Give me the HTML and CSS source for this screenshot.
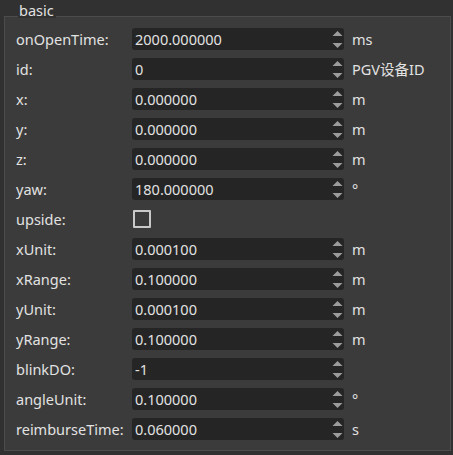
FILE: index.html
```html
<!DOCTYPE html>
<html>
<head>
<meta charset="utf-8">
<link rel="stylesheet" href="styles.css">
</head>
<body>
<div class="group">
  <div class="legend">basic</div>
  <div class="rows">
    <div class="label">onOpenTime:</div>
    <div class="spin"><span class="val">2000.000000</span><span class="arrows"><svg width="11" height="18" viewBox="0 0 11 18"><path d="M5.5 1 L10.5 6 L0.5 6 Z"/><path d="M0.5 13 L10.5 13 L5.5 18 Z"/></svg></span></div>
    <div class="unit">ms</div>

    <div class="label">id:</div>
    <div class="spin"><span class="val">0</span><span class="arrows"><svg width="11" height="18" viewBox="0 0 11 18"><path d="M5.5 1 L10.5 6 L0.5 6 Z"/><path d="M0.5 13 L10.5 13 L5.5 18 Z"/></svg></span></div>
    <div class="unit">PGV设备ID</div>

    <div class="label">x:</div>
    <div class="spin"><span class="val">0.000000</span><span class="arrows"><svg width="11" height="18" viewBox="0 0 11 18"><path d="M5.5 1 L10.5 6 L0.5 6 Z"/><path d="M0.5 13 L10.5 13 L5.5 18 Z"/></svg></span></div>
    <div class="unit">m</div>

    <div class="label">y:</div>
    <div class="spin"><span class="val">0.000000</span><span class="arrows"><svg width="11" height="18" viewBox="0 0 11 18"><path d="M5.5 1 L10.5 6 L0.5 6 Z"/><path d="M0.5 13 L10.5 13 L5.5 18 Z"/></svg></span></div>
    <div class="unit">m</div>

    <div class="label">z:</div>
    <div class="spin"><span class="val">0.000000</span><span class="arrows"><svg width="11" height="18" viewBox="0 0 11 18"><path d="M5.5 1 L10.5 6 L0.5 6 Z"/><path d="M0.5 13 L10.5 13 L5.5 18 Z"/></svg></span></div>
    <div class="unit">m</div>

    <div class="label">yaw:</div>
    <div class="spin"><span class="val">180.000000</span><span class="arrows"><svg width="11" height="18" viewBox="0 0 11 18"><path d="M5.5 1 L10.5 6 L0.5 6 Z"/><path d="M0.5 13 L10.5 13 L5.5 18 Z"/></svg></span></div>
    <div class="unit">°</div>

    <div class="label">upside:</div>
    <div class="checkcell"><span class="check"></span></div>
    <div class="unit"></div>

    <div class="label">xUnit:</div>
    <div class="spin"><span class="val">0.000100</span><span class="arrows"><svg width="11" height="18" viewBox="0 0 11 18"><path d="M5.5 1 L10.5 6 L0.5 6 Z"/><path d="M0.5 13 L10.5 13 L5.5 18 Z"/></svg></span></div>
    <div class="unit">m</div>

    <div class="label">xRange:</div>
    <div class="spin"><span class="val">0.100000</span><span class="arrows"><svg width="11" height="18" viewBox="0 0 11 18"><path d="M5.5 1 L10.5 6 L0.5 6 Z"/><path d="M0.5 13 L10.5 13 L5.5 18 Z"/></svg></span></div>
    <div class="unit">m</div>

    <div class="label">yUnit:</div>
    <div class="spin"><span class="val">0.000100</span><span class="arrows"><svg width="11" height="18" viewBox="0 0 11 18"><path d="M5.5 1 L10.5 6 L0.5 6 Z"/><path d="M0.5 13 L10.5 13 L5.5 18 Z"/></svg></span></div>
    <div class="unit">m</div>

    <div class="label">yRange:</div>
    <div class="spin"><span class="val">0.100000</span><span class="arrows"><svg width="11" height="18" viewBox="0 0 11 18"><path d="M5.5 1 L10.5 6 L0.5 6 Z"/><path d="M0.5 13 L10.5 13 L5.5 18 Z"/></svg></span></div>
    <div class="unit">m</div>

    <div class="label">blinkDO:</div>
    <div class="spin"><span class="val">-1</span><span class="arrows"><svg width="11" height="18" viewBox="0 0 11 18"><path d="M5.5 1 L10.5 6 L0.5 6 Z"/><path d="M0.5 13 L10.5 13 L5.5 18 Z"/></svg></span></div>
    <div class="unit"></div>

    <div class="label">angleUnit:</div>
    <div class="spin"><span class="val">0.100000</span><span class="arrows"><svg width="11" height="18" viewBox="0 0 11 18"><path d="M5.5 1 L10.5 6 L0.5 6 Z"/><path d="M0.5 13 L10.5 13 L5.5 18 Z"/></svg></span></div>
    <div class="unit">°</div>

    <div class="label">reimburseTime:</div>
    <div class="spin"><span class="val">0.060000</span><span class="arrows"><svg width="11" height="18" viewBox="0 0 11 18"><path d="M5.5 1 L10.5 6 L0.5 6 Z"/><path d="M0.5 13 L10.5 13 L5.5 18 Z"/></svg></span></div>
    <div class="unit">s</div>
  </div>
</div>
</body>
</html>
```
FILE: styles.css
```css
html, body {
  margin: 0;
  padding: 0;
  background: #313131;
  height: 100%;
}
body {
  font-family: "Noto Sans", "Noto Sans CJK SC", sans-serif;
  font-size: 14.5px;
  color: #e2e2e2;
  padding: 16px 2px 4px 4px;
  box-sizing: border-box;
}
.group {
  position: relative;
  background: #3b3b3b;
  border: 1px solid #4c4c4c;
  height: 100%;
  box-sizing: border-box;
}
.legend {
  position: absolute;
  top: -15px;
  left: 13px;
  padding: 0 2px 0 1px;
  background: #313131;
  line-height: 16px;
  height: 16px;
  color: #e2e2e2;
}
.rows {
  display: grid;
  grid-template-columns: 108px 212px auto;
  grid-auto-rows: 22px;
  row-gap: 8px;
  column-gap: 8px;
  padding: 11px 0 0 11px;
  align-items: center;
}
.label {
  line-height: 22px;
  white-space: nowrap;
}
.spin {
  display: flex;
  align-items: center;
  height: 22px;
  background: #252525;
  border-radius: 3px;
}
.val {
  flex: 1;
  padding-left: 3px;
  line-height: 22px;
}
.arrows {
  display: flex;
  width: 11px;
  margin-right: 1px;
  align-items: center;
}
.arrows svg {
  fill: #9c9c9c;
  display: block;
}
.unit {
  line-height: 22px;
  white-space: nowrap;
}
.checkcell {
  display: flex;
  align-items: center;
  height: 22px;
}
.check {
  display: block;
  width: 18px;
  height: 18px;
  margin-left: 1px;
  box-sizing: border-box;
  border: 2px solid #c9c9c9;
  border-radius: 1px;
}
```
